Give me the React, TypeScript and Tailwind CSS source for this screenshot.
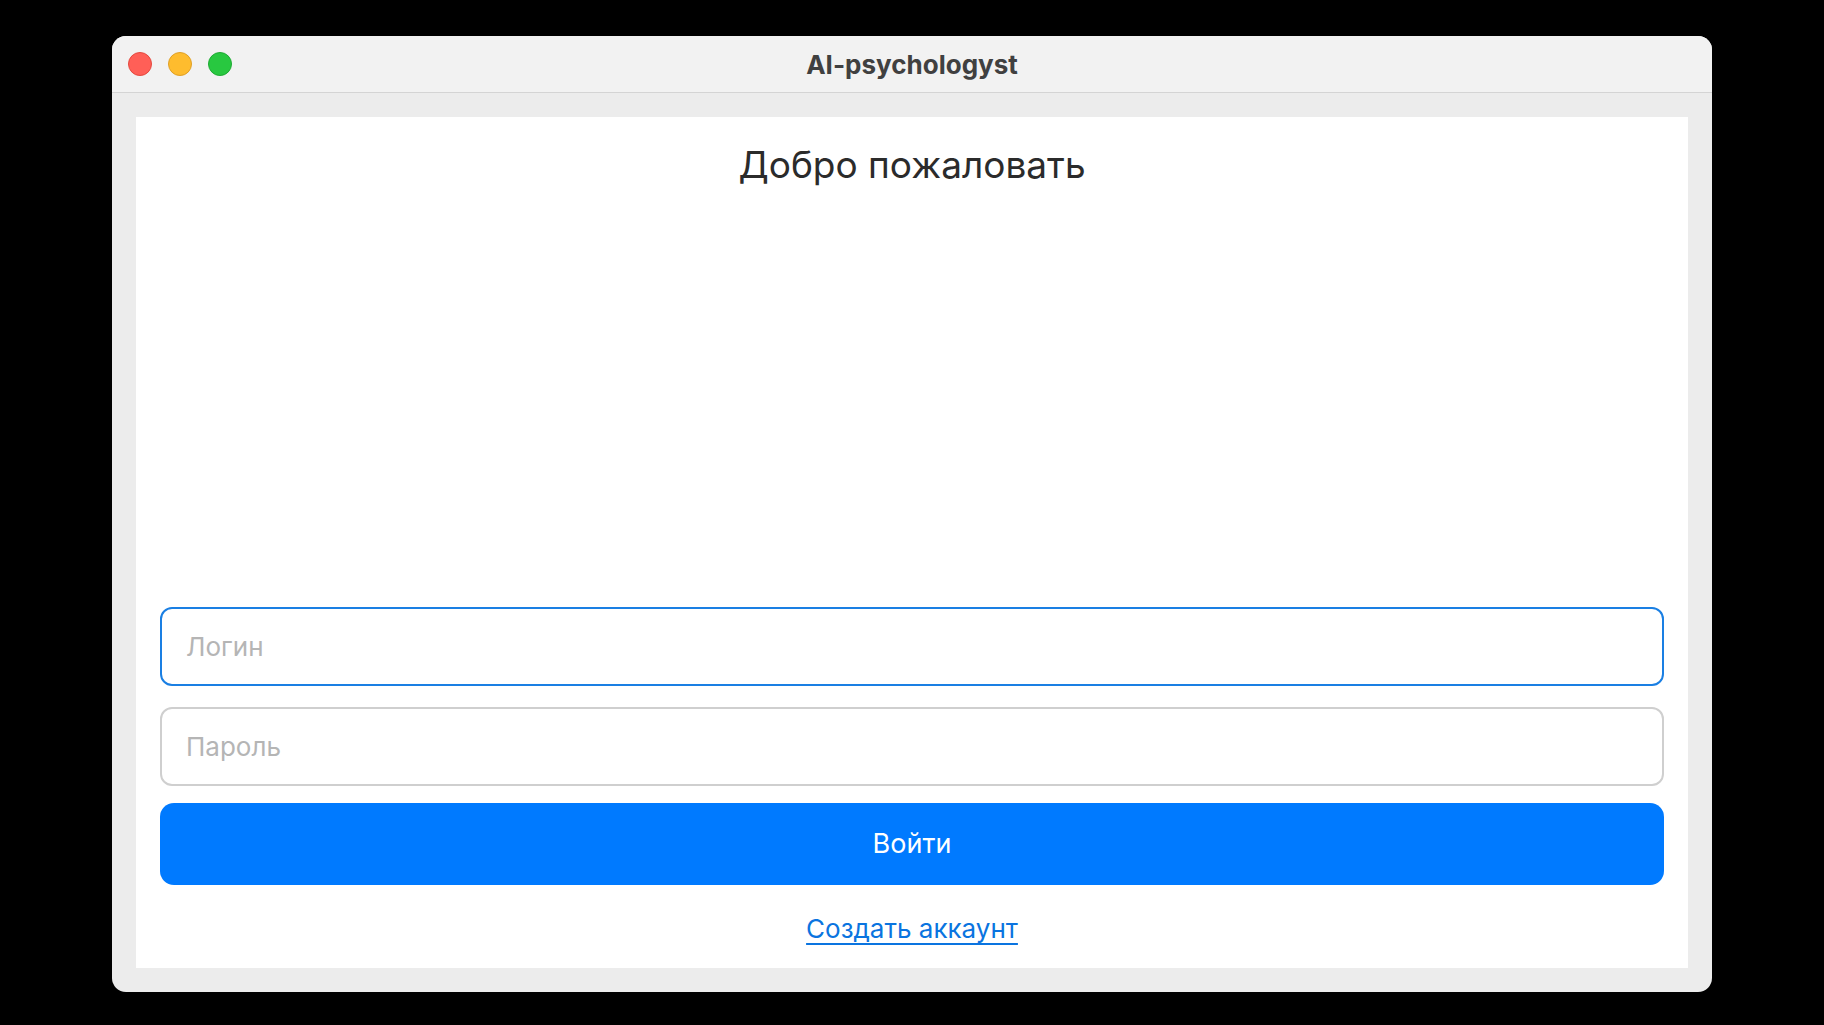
import React from "react";

export default function App() {
  return (
    <div
      className="w-[1824px] h-[1025px] bg-black flex flex-col items-start"
      style={{ fontFamily: 'Inter, "Noto Sans", "Liberation Sans", sans-serif' }}
    >
      <div className="ml-[112px] mt-[36px] w-[1600px] h-[956px] rounded-[14px] bg-[#ececec] overflow-hidden flex flex-col">
        <div className="relative h-[57px] shrink-0 bg-[#f2f2f2] border-b border-[#d4d4d4] flex items-center">
          <div className="flex items-center gap-[16px] pl-[16px]">
            <div className="w-[24px] h-[24px] rounded-full bg-[#ff5f57] border border-[#e5493f]" />
            <div className="w-[24px] h-[24px] rounded-full bg-[#febc2e] border border-[#e0a026]" />
            <div className="w-[24px] h-[24px] rounded-full bg-[#28c840] border border-[#1fab34]" />
          </div>
          <div className="absolute inset-0 flex items-center justify-center text-[26px] font-bold text-[#404040]">
            AI-psychologyst
          </div>
        </div>
        <div className="flex-1 p-[24px] flex">
          <div className="flex-1 bg-white flex flex-col px-[24px]">
            <h1 className="text-center text-[37px] leading-[44px] text-[#2b2b2b] pt-[26px]">
              Добро пожаловать
            </h1>
            <div className="flex-1" />
            <div className="h-[79px] rounded-[12px] border-2 border-[#1a7fe3] flex items-center px-[24px] text-[26px] text-[#b5b5b5]">
              Логин
            </div>
            <div className="mt-[21px] h-[79px] rounded-[12px] border-2 border-[#cfcfcf] flex items-center px-[24px] text-[26px] text-[#b5b5b5]">
              Пароль
            </div>
            <div className="mt-[17px] h-[82px] rounded-[14px] bg-[#007aff] flex items-center justify-center text-[27px] text-white">
              Войти
            </div>
            <div className="mt-[27px] mb-[22px] flex justify-center">
              <span className="text-[26px] leading-[34px] text-[#0a74e0] underline underline-offset-[5px] decoration-[1.5px]">
                Создать аккаунт
              </span>
            </div>
          </div>
        </div>
      </div>
    </div>
  );
}
